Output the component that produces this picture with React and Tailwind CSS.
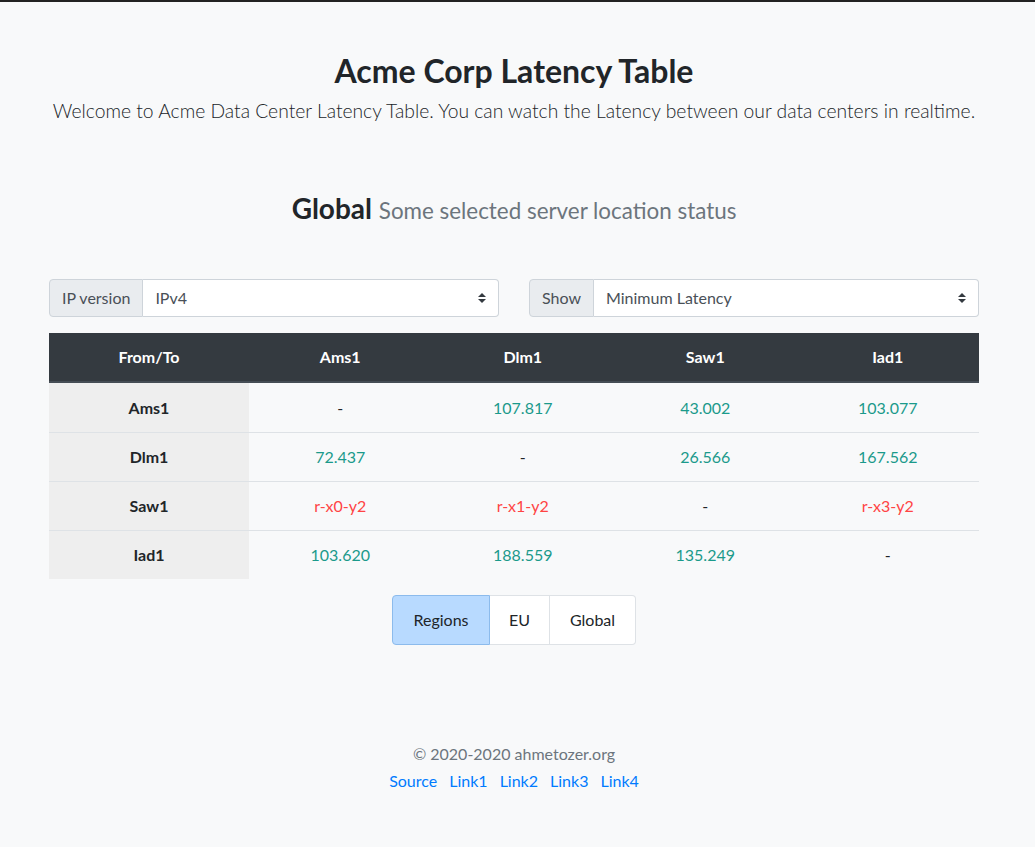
import React from "react";

const font = { fontFamily: 'Lato, "Open Sans", Arial, sans-serif' };

function Arrow() {
  return (
    <svg width="8" height="10" viewBox="0 0 4 5" className="shrink-0">
      <path fill="#343a40" d="M2 0L0 2h4zm0 5L0 3h4z" />
    </svg>
  );
}

function SelectGroup({ label, value }) {
  return (
    <div className="flex h-[38px] w-full">
      <div className="flex items-center px-[12px] bg-[#e9ecef] border border-[#ced4da] rounded-l-[4px] text-[#495057] text-[16px]">
        {label}
      </div>
      <div className="flex flex-1 items-center justify-between pl-[12px] pr-[12px] bg-white border border-l-0 border-[#ced4da] rounded-r-[4px] text-[#495057] text-[16px]">
        <span>{value}</span>
        <Arrow />
      </div>
    </div>
  );
}

const G = "text-[#1b9a8b]";
const R = "text-[#ff4444]";

const rows = [
  ["Ams1", ["-", ""], ["107.817", G], ["43.002", G], ["103.077", G]],
  ["Dlm1", ["72.437", G], ["-", ""], ["26.566", G], ["167.562", G]],
  ["Saw1", ["r-x0-y2", R], ["r-x1-y2", R], ["-", ""], ["r-x3-y2", R]],
  ["Iad1", ["103.620", G], ["188.559", G], ["135.249", G], ["-", ""]],
];

export default function App() {
  return (
    <div style={font} className="min-h-[847px] bg-[#f8f9fa] text-[#212529] border-t-2 border-[#222]">
      <div className="w-[930px] ml-[49px] flex flex-col items-center">
        <h1 className="mt-[50px] text-[32px] leading-[38px] font-bold">Acme Corp Latency Table</h1>
        <p className="mt-[6px] text-[19.3px] leading-[30px] font-light whitespace-nowrap">
          Welcome to Acme Data Center Latency Table. You can watch the Latency between our data centers in realtime.
        </p>
        <h3 className="mt-[65px] text-[28px] leading-[34px] font-bold">
          Global <small className="text-[22.4px] font-normal text-[#6c757d]">Some selected server location status</small>
        </h3>

        <div className="mt-[51px] w-full grid grid-cols-2 gap-[30px]">
          <SelectGroup label="IP version" value="IPv4" />
          <SelectGroup label="Show" value="Minimum Latency" />
        </div>

        <div className="mt-[16px] w-full">
          <div className="grid grid-cols-[200px_1fr_1fr_1fr_1fr] h-[50px] bg-[#343a40] border-b-2 border-[#454d55] text-white font-bold text-[16px]">
            {["From/To", "Ams1", "Dlm1", "Saw1", "Iad1"].map((h) => (
              <div key={h} className="flex items-center justify-center">{h}</div>
            ))}
          </div>
          {rows.map((r, i) => (
            <div
              key={r[0]}
              className={`grid grid-cols-[200px_1fr_1fr_1fr_1fr] h-[49px] text-[16px] ${i > 0 ? "border-t border-[#dee2e6]" : ""}`}
            >
              <div className="flex items-center justify-center bg-[#eeeeee] font-bold">{r[0]}</div>
              {r.slice(1).map(([v, c], j) => (
                <div key={j} className={`flex items-center justify-center ${c}`}>{v}</div>
              ))}
            </div>
          ))}
        </div>

        <div className="mt-[16px] flex h-[50px] text-[16px]">
          <div className="w-[98px] flex items-center justify-center bg-[#b8daff] border border-[#8cbbec] rounded-l-[4px]">Regions</div>
          <div className="w-[60px] flex items-center justify-center bg-white border border-l-0 border-[#dee2e6]">EU</div>
          <div className="w-[86px] flex items-center justify-center bg-white border border-l-0 border-[#dee2e6] rounded-r-[4px]">Global</div>
        </div>

        <div className="mt-[97px] text-[16px] leading-[24px] text-[#6c757d]">© 2020-2020 ahmetozer.org</div>
        <div className="mt-[3px] flex gap-[12px] text-[16px] leading-[24px] text-[#007bff]">
          <span>Source</span>
          <span>Link1</span>
          <span>Link2</span>
          <span>Link3</span>
          <span>Link4</span>
        </div>
      </div>
    </div>
  );
}
